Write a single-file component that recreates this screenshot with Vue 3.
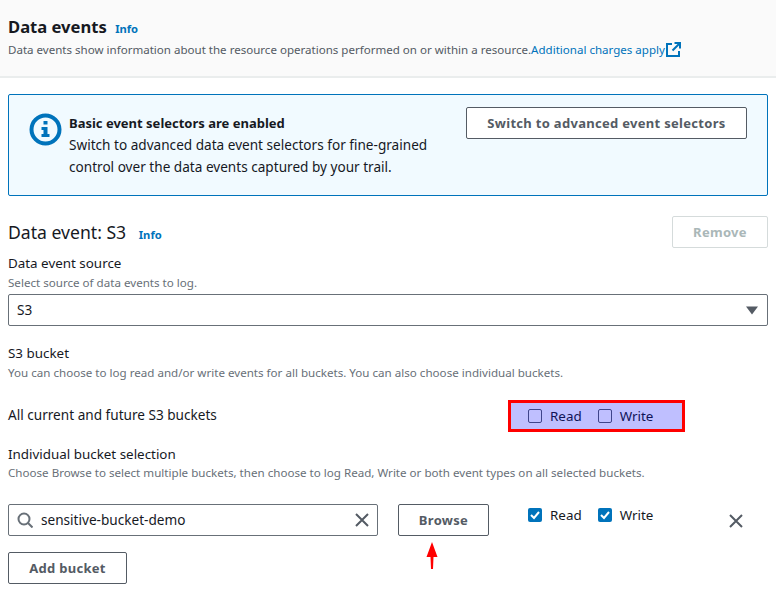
<script setup>
const desc = 'Data events show information about the resource operations performed on or within a resource.'
</script>

<template>
  <div class="page">
    <header class="head">
      <h2 class="title">Data events <a class="info big">Info</a></h2>
      <p class="hint dark">{{ desc }}<a class="link">Additional charges apply</a>
        <svg class="ext" width="15" height="15" viewBox="0 0 15 15" fill="none" stroke="#0073bb" stroke-width="2">
          <path d="M6 2H1v12h12V9" />
          <path d="M8.500 1H14v5.500M14 1L6.500 8.500" />
        </svg>
      </p>
    </header>

    <main class="body">
      <section class="alert">
        <svg class="alert-icon" width="33" height="33" viewBox="0 0 33 33">
          <circle cx="16.5" cy="16.5" r="14" fill="none" stroke="#0073bb" stroke-width="4" />
          <path d="M14.5 8h4v3.500h-4zM12.500 14h6v7h2v3h-8v-3h2v-4h-2z" fill="#0073bb" />
        </svg>
        <div class="alert-text">
          <div class="alert-title">Basic event selectors are enabled</div>
          <div>Switch to advanced data event selectors for fine-grained<br />control over the data events captured by your trail.</div>
        </div>
        <button class="btn switch">Switch to advanced event selectors</button>
      </section>

      <div class="event-head">
        <h3 class="subtitle">Data event: S3 <a class="info">Info</a></h3>
        <button class="btn remove">Remove</button>
      </div>

      <div class="label first">Data event source</div>
      <div class="hint src-hint">Select source of data events to log.</div>
      <div class="select">
        <span>S3</span>
        <svg width="12" height="9" viewBox="0 0 12 9"><path d="M0 .5h12L6 8.500z" fill="#545b64" /></svg>
      </div>

      <div class="label bucket-label">S3 bucket</div>
      <div class="hint">You can choose to log read and/or write events for all buckets. You can also choose individual buckets.</div>

      <div class="all-row">
        <span class="all-text">All current and future S3 buckets</span>
        <div class="mark">
          <label class="check"><span class="box"></span>Read</label>
          <label class="check"><span class="box"></span>Write</label>
        </div>
      </div>

      <div class="label indiv-label">Individual bucket selection</div>
      <div class="hint">Choose Browse to select multiple buckets, then choose to log Read, Write or both event types on all selected buckets.</div>

      <div class="bucket-row">
        <div class="search">
          <svg class="search-icon" width="16" height="16" viewBox="0 0 16 16" fill="none" stroke="#687078" stroke-width="2">
            <circle cx="7" cy="7" r="5.500" />
            <path d="M11 11l4.500 4.500" />
          </svg>
          <span class="value">sensitive-bucket-demo</span>
          <svg width="14" height="14" viewBox="0 0 14 14" fill="none" stroke="#545b64" stroke-width="2"><path d="M1 1l12 12M13 1L1 13" /></svg>
        </div>
        <div class="browse-col">
          <button class="btn browse">Browse</button>
          <svg class="arrow" width="12" height="27" viewBox="0 0 12 27">
            <path d="M6 0L11.500 15H7.500L7 27H5L4.500 15H.5z" fill="#f00" />
          </svg>
        </div>
        <div class="checks">
          <label class="check"><span class="box on"><svg width="14" height="14" viewBox="0 0 14 14" fill="none" stroke="#fff" stroke-width="2"><path d="M3 7l3 3 5-6" /></svg></span>Read</label>
          <label class="check"><span class="box on"><svg width="14" height="14" viewBox="0 0 14 14" fill="none" stroke="#fff" stroke-width="2"><path d="M3 7l3 3 5-6" /></svg></span>Write</label>
        </div>
        <svg class="close" width="14" height="14" viewBox="0 0 14 14" fill="none" stroke="#545b64" stroke-width="2"><path d="M1 1l12 12M13 1L1 13" /></svg>
      </div>

      <button class="btn add">Add bucket</button>
    </main>
  </div>
</template>

<style>
html, body { margin: 0; background: #fff; }
</style>

<style scoped>
.page {
  width: 776px;
  height: 599px;
  overflow: hidden;
  font-family: "Noto Sans", sans-serif;
  font-size: 13.6px;
  line-height: 22px;
  color: #16191f;
  background: #fff;
}
.head {
  height: 78px;
  box-sizing: border-box;
  padding: 14px 8px 0;
  background: #fafafa;
  border-bottom: 2px solid #eaeded;
}
.title { margin: 0; font-size: 16.6px; line-height: 26px; font-weight: 700; }
.info { font-size: 11.2px; font-weight: 700; color: #0073bb; margin-left: 8px; }
.info.big { margin-left: 4px; }
.hint { font-size: 11.6px; line-height: 16px; color: #687078; }
.hint.dark { margin: 0; font-size: 11.55px; color: #545b64; white-space: nowrap; }
.link { color: #0073bb; }
.ext { vertical-align: -3px; margin-left: 1px; }
.body { padding: 16px 8px 0; }
.alert {
  height: 102px;
  box-sizing: border-box;
  display: flex;
  padding: 12px 20px 0;
  background: #f1faff;
  border: 1px solid #0073bb;
  border-radius: 2px;
}
.alert-icon { flex: none; margin: 6px 7px 0 0; }
.alert-text { flex: 1; padding-top: 5px; }
.alert-title { font-size: 13px; font-weight: 700; }
.btn {
  box-sizing: border-box;
  height: 32px;
  padding: 0;
  font-family: inherit;
  font-size: 13px;
  font-weight: 700;
  letter-spacing: .3px;
  color: #545b64;
  background: #fff;
  border: 1px solid #545b64;
  border-radius: 2px;
}
.switch { flex: none; width: 281px; }
.event-head {
  display: flex;
  justify-content: space-between;
  margin-top: 20px;
  height: 32px;
}
.subtitle { margin: 0; padding-top: 3px; font-size: 17.6px; line-height: 26px; font-weight: 400; }
.remove { width: 96px; color: #aab7b8; border-color: #d5dbdb; }
.first { margin-top: 4px; }
.label { font-size: 13.4px; line-height: 22px; }
.src-hint { padding-top: 1px; }
.select {
  box-sizing: border-box;
  height: 32px;
  margin-top: 3px;
  padding: 0 9px 0 8px;
  display: flex;
  align-items: center;
  justify-content: space-between;
  border: 1px solid #687078;
  border-radius: 2px;
}
.bucket-label { margin-top: 16px; }
.hint + .all-row { margin-top: 19px; }
.bucket-label + .hint { padding-top: 1px; }
.all-row {
  display: flex;
  align-items: center;
  height: 32px;
}
.all-text { flex: 0 0 500px; padding-bottom: 2px; }
.mark {
  box-sizing: border-box;
  width: 177px;
  height: 32px;
  padding: 0 0 1px 17px;
  display: flex;
  align-items: center;
  gap: 16px;
  background: #bfbfff;
  border: 3px solid #f00;
}
.check { display: inline-flex; align-items: center; gap: 8px; font-size: 13.4px; }
.box {
  box-sizing: border-box;
  width: 14px;
  height: 14px;
  border: 1px solid #545b64;
  border-radius: 2px;
  flex: none;
  display: block;
}
.mark .box { border-color: #3f448b; }
.mark .check { color: #101357; }
.box.on { background: #0073bb; border: none; }
.box.on svg { display: block; }
.indiv-label { margin-top: 11px; }
.bucket-row {
  display: flex;
  align-items: flex-start;
  margin-top: 23px;
  height: 48px;
}
.search {
  box-sizing: border-box;
  width: 370px;
  height: 32px;
  display: flex;
  align-items: center;
  padding: 0 8px;
  border: 1px solid #687078;
  border-radius: 2px;
}
.search-icon { flex: none; margin-right: 8px; }
.value { flex: 1; }
.browse-col { margin-left: 20px; width: 91px; display: flex; flex-direction: column; }
.browse { width: 91px; }
.arrow { margin: 6px 0 0 28px; }
.checks { margin-left: 39px; display: flex; gap: 16px; height: 22px; }
.close { margin: 10px 0 0 76px; }
.add { width: 119px; }
</style>
